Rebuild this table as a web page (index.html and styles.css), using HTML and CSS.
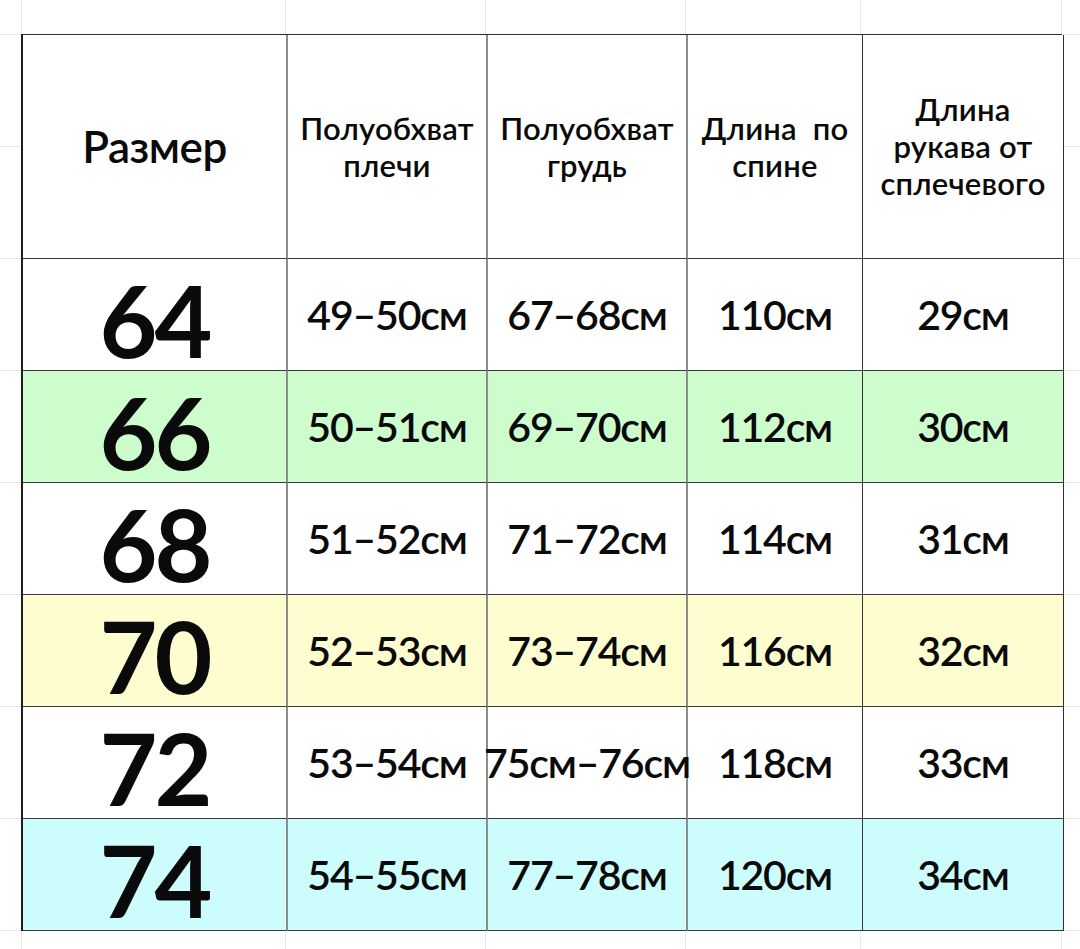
FILE: index.html
```html
<!DOCTYPE html>
<html lang="ru">
<head>
<meta charset="utf-8">
<title>Размеры</title>
<link rel="stylesheet" href="styles.css">
</head>
<body>
<div class="sheet">
  <div class="size-table">
    <div class="cell head col-size"><span class="head-main">Размер</span></div>
    <div class="cell head col-a"><span>Полуобхват<br>плечи</span></div>
    <div class="cell head col-b"><span>Полуобхват<br>грудь</span></div>
    <div class="cell head col-c"><span>Длина&nbsp; по<br>спине</span></div>
    <div class="cell head col-d"><span>Длина<br>рукава от<br>сплечевого</span></div>

    <div class="cell big col-size">64</div>
    <div class="cell val col-a">49–50см</div>
    <div class="cell val col-b">67–68см</div>
    <div class="cell val col-c">110см</div>
    <div class="cell val col-d">29см</div>

    <div class="cell big col-size green">66</div>
    <div class="cell val col-a green">50–51см</div>
    <div class="cell val col-b green">69–70см</div>
    <div class="cell val col-c green">112см</div>
    <div class="cell val col-d green">30см</div>

    <div class="cell big col-size">68</div>
    <div class="cell val col-a">51–52см</div>
    <div class="cell val col-b">71–72см</div>
    <div class="cell val col-c">114см</div>
    <div class="cell val col-d">31см</div>

    <div class="cell big col-size yellow">70</div>
    <div class="cell val col-a yellow">52–53см</div>
    <div class="cell val col-b yellow">73–74см</div>
    <div class="cell val col-c yellow">116см</div>
    <div class="cell val col-d yellow">32см</div>

    <div class="cell big col-size">72</div>
    <div class="cell val col-a">53–54см</div>
    <div class="cell val col-b">75см–76см</div>
    <div class="cell val col-c">118см</div>
    <div class="cell val col-d">33см</div>

    <div class="cell big col-size blue">74</div>
    <div class="cell val col-a blue">54–55см</div>
    <div class="cell val col-b blue">77–78см</div>
    <div class="cell val col-c blue">120см</div>
    <div class="cell val col-d blue">34см</div>
  </div>
</div>
</body>
</html>
```

FILE: styles.css
```css
html, body {
  margin: 0;
  padding: 0;
  background: #ffffff;
}

.sheet {
  width: 1080px;
  height: 949px;
  box-sizing: border-box;
  padding: 34px 0 0 21px;
  overflow: hidden;
  background-color: #ffffff;
  background-image:
    linear-gradient(#e8e8e8, #e8e8e8),
    linear-gradient(#e8e8e8, #e8e8e8),
    linear-gradient(#e8e8e8, #e8e8e8),
    linear-gradient(#e8e8e8, #e8e8e8),
    linear-gradient(#e8e8e8, #e8e8e8),
    linear-gradient(#e8e8e8, #e8e8e8),
    repeating-linear-gradient(to bottom, #e8e8e8 0 1px, transparent 1px 112px);
  background-size:
    1px 100%, 1px 100%, 1px 100%, 1px 100%, 1px 100%, 1px 100%,
    100% 112px;
  background-position:
    21px 0, 285px 0, 485px 0, 685px 0, 860px 0, 1061px 0,
    0 34px;
  background-repeat:
    no-repeat, no-repeat, no-repeat, no-repeat, no-repeat, no-repeat,
    repeat;
  font-family: "Lato", "Noto Sans", "DejaVu Sans", sans-serif;
  color: #0a0a0a;
}

.size-table {
  display: grid;
  grid-template-columns: 265px 200px 200px 175px 201px;
  grid-template-rows: 224px repeat(6, 112px);
  width: 1041px;
  background: #ffffff;
  border-top: 1.5px solid #2e2e2e;
  border-left: 2px solid #1e1e1e;
  box-sizing: border-box;
}

.cell {
  display: flex;
  align-items: center;
  justify-content: center;
  text-align: center;
  white-space: nowrap;
  box-sizing: border-box;
  border-bottom: 1.5px solid #3a3a3a;
  border-right: 1.5px solid #333333;
  min-width: 0;
}

.col-size,
.col-a,
.col-b {
  border-right: 2px solid #8c8c8c;
}

.col-d {
  border-right: 1.5px solid #2e2e2e;
}

.head {
  font-size: 31px;
  font-weight: 600;
  line-height: 37px;
  letter-spacing: 0.2px;
}

.head-main {
  font-size: 44px;
  font-weight: 600;
  letter-spacing: -0.5px;
}

.big {
  font-size: 100px;
  font-weight: 700;
  letter-spacing: -3px;
  padding-top: 8px;
}

.val {
  font-size: 41px;
  font-weight: 600;
  letter-spacing: -1.2px;
}

.green {
  background: #cdfccd;
}

.yellow {
  background: #fdfdd0;
}

.blue {
  background: #ccfcfc;
}
```
